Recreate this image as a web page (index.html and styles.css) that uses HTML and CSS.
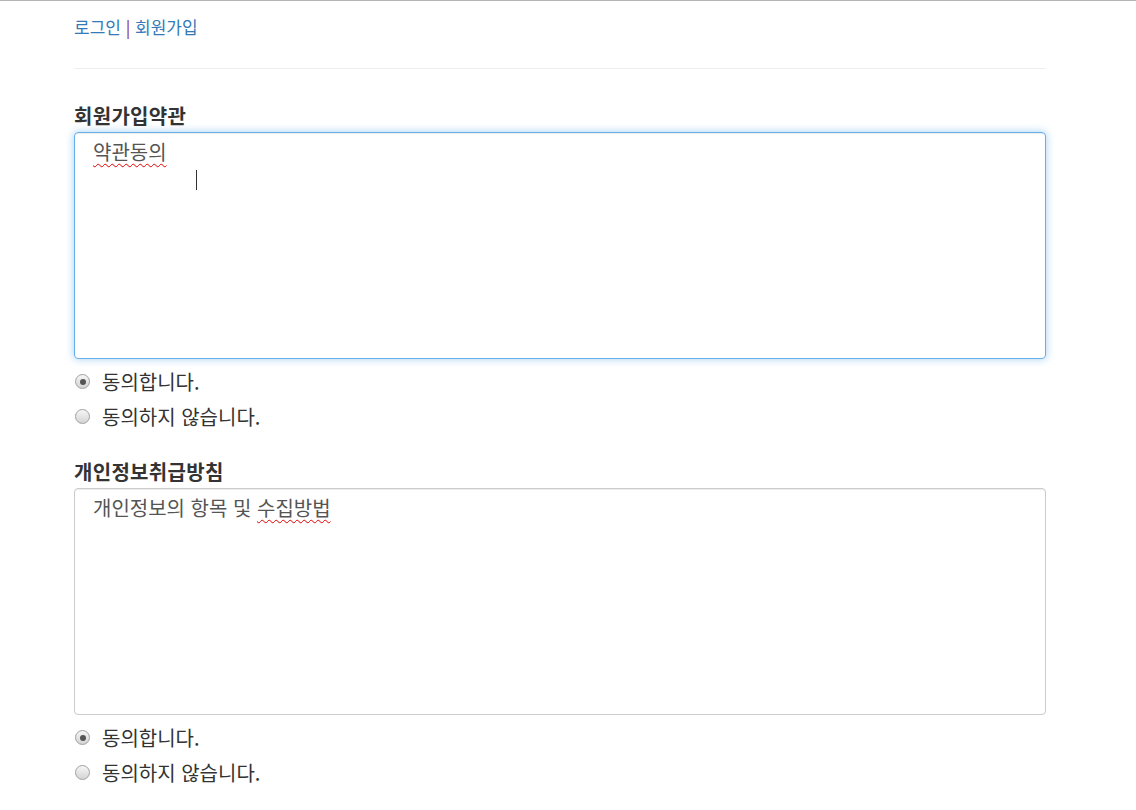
FILE: index.html
```html
<!DOCTYPE html>
<html lang="ko">
<head>
<meta charset="utf-8">
<link rel="stylesheet" href="styles.css">
</head>
<body>
<div class="page">
  <div class="topnav"><a class="link">로그인</a> <span class="sep">|</span> <a class="link">회원가입</a></div>
  <div class="rule"></div>

  <section class="group first">
    <div class="label">회원가입약관</div>
    <div class="box focus">
      <div class="line"><span class="spell">약관동의</span></div>
      <div class="line"><span class="caret"></span></div>
    </div>
    <div class="radios">
      <div class="radio"><span class="dot checked"></span><span>동의합니다.</span></div>
      <div class="radio"><span class="dot"></span><span>동의하지 않습니다.</span></div>
    </div>
  </section>

  <section class="group">
    <div class="label">개인정보취급방침</div>
    <div class="box">
      <div class="line">개인정보의 항목 및 <span class="spell">수집방법</span></div>
    </div>
    <div class="radios">
      <div class="radio"><span class="dot checked"></span><span>동의합니다.</span></div>
      <div class="radio"><span class="dot"></span><span>동의하지 않습니다.</span></div>
    </div>
  </section>
</div>
</body>
</html>
```

FILE: styles.css
```css
html, body {
  margin: 0;
  padding: 0;
  background: #fff;
}
body {
  border-top: 1px solid #b4b4b4;
  font-family: "Noto Sans CJK KR", "Noto Sans", sans-serif;
  color: #333;
}
.page {
  width: 972px;
  margin-left: 74px;
}
.topnav {
  padding-top: 15px;
  font-size: 17px;
  line-height: 22px;
  height: 22px;
  color: #337ab7;
}
.link {
  color: #337ab7;
  text-decoration: none;
}
.sep {
  color: #8a2b4f;
}
.rule {
  margin-top: 30px;
  border-top: 1px solid #eeeeee;
}
.group {
  margin-top: 26px;
}
.group.first {
  margin-top: 35px;
}
.label {
  font-size: 20px;
  font-weight: 700;
  line-height: 24px;
  height: 24px;
  color: #333;
  margin-bottom: 4px;
  letter-spacing: 0.3px;
}
.box {
  box-sizing: border-box;
  height: 227px;
  border: 1px solid #cccccc;
  border-radius: 4px;
  padding: 6px 18px;
  font-size: 20px;
  line-height: 26px;
  color: #555;
  box-shadow: inset 0 1px 1px rgba(0,0,0,0.075);
}
.box.focus {
  border-color: #66afe9;
  box-shadow: inset 0 1px 1px rgba(0,0,0,0.075), 0 0 8px rgba(102,175,233,0.6);
}
.line {
  height: 26px;
  position: relative;
}
.spell {
  text-decoration: underline wavy #e00000;
  text-decoration-thickness: 1px;
  text-underline-offset: 3px;
}
.caret {
  position: absolute;
  left: 103px;
  top: 5px;
  width: 1px;
  height: 20px;
  background: #333;
}
.radios {
  padding-top: 5px;
}
.radio {
  display: flex;
  align-items: center;
  gap: 12px;
  height: 35px;
  font-size: 20px;
  color: #333;
  margin-left: 1px;
}
.dot {
  box-sizing: border-box;
  width: 15px;
  height: 15px;
  border-radius: 50%;
  border: 1px solid #a0a0a0;
  background: linear-gradient(#f6f6f6, #d4d4d4);
  display: flex;
  align-items: center;
  justify-content: center;
  flex: none;
}
.dot.checked::after {
  content: "";
  width: 6px;
  height: 6px;
  border-radius: 50%;
  background: #555;
}
```
